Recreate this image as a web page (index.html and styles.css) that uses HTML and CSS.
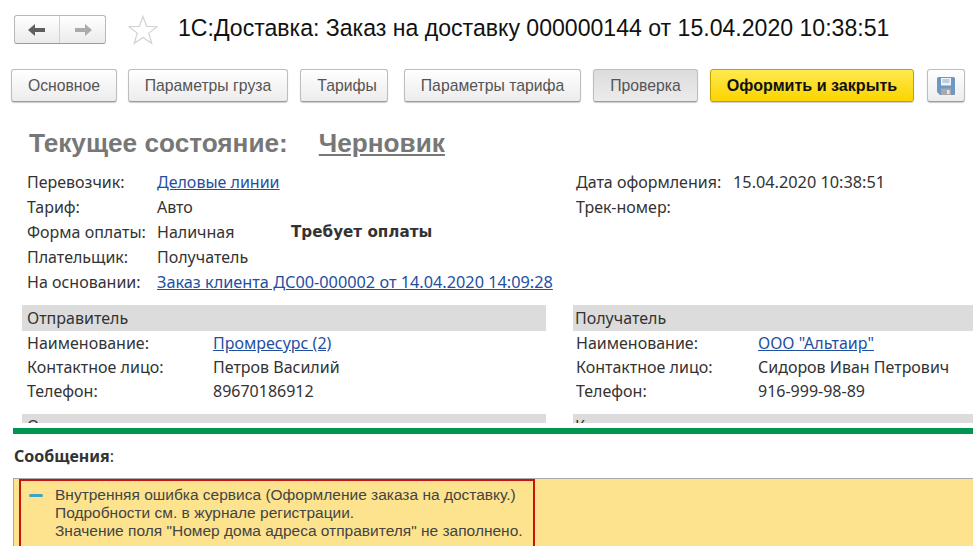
FILE: index.html
```html
<!DOCTYPE html>
<html lang="ru">
<head>
<meta charset="utf-8">
<title>1С:Доставка</title>
<link rel="stylesheet" href="styles.css">
</head>
<body>
<header class="head">
  <div class="nav">
    <span class="nav-btn nav-back"><svg width="20" height="14" viewBox="0 0 20 14"><path d="M1 7 8 1v4h10v4H8v4z" fill="#5f5f5f"/></svg></span>
    <span class="nav-btn nav-fwd"><svg width="20" height="14" viewBox="0 0 20 14"><path d="M19 7 12 1v4H2v4h10v4z" fill="#ababab"/></svg></span>
  </div>
  <svg class="star" width="30" height="30" viewBox="0 0 30 30"><path d="M15 1.5 18.6 11.4 29 11.7 20.8 18.1 23.7 28.3 15 22.4 6.3 28.3 9.2 18.1 1 11.7 11.4 11.4Z" fill="#fff" stroke="#d2d2d2" stroke-width="1.2"/></svg>
  <h1 class="title">1С:Доставка: Заказ на доставку 000000144 от 15.04.2020 10:38:51</h1>
</header>
<nav class="tabs">
  <button class="btn w-main">Основное</button>
  <button class="btn w-cargo">Параметры груза</button>
  <button class="btn w-tariffs">Тарифы</button>
  <button class="btn w-params">Параметры тарифа</button>
  <button class="btn w-check is-active">Проверка</button>
  <button class="btn w-submit is-primary">Оформить и закрыть</button>
  <button class="btn w-save" aria-label="Сохранить"><svg width="18" height="18" viewBox="0 0 18 18"><path d="M0 1.5A1.5 1.5 0 0 1 1.5 0h15A1.5 1.5 0 0 1 18 1.5V17a1 1 0 0 1-1 1H3l-3-3z" fill="#6f97c4"/><rect x="4" y="1" width="10" height="7.5" fill="#eef3f8"/><path d="M5.5 3h7M5.5 5h7" stroke="#8fa9c6"/><rect x="4" y="11.5" width="10" height="6.5" fill="#a9a9a9"/><rect x="10" y="13" width="2.5" height="4" fill="#e5e5e5"/></svg></button>
</nav>
<main class="form">
  <h2 class="status"><span class="status-label">Текущее состояние:</span><a class="status-value">Черновик</a></h2>
  <section class="summary">
    <dl class="fields fields-main">
      <dt>Перевозчик:</dt><dd><a>Деловые линии</a></dd>
      <dt>Тариф:</dt><dd>Авто</dd>
      <dt>Форма оплаты:</dt><dd class="pay"><span class="pay-type">Наличная</span><b class="pay-note">Требует оплаты</b></dd>
      <dt>Плательщик:</dt><dd>Получатель</dd>
      <dt>На основании:</dt><dd><a class="digits">Заказ клиента ДС00-000002 от 14.04.2020 14:09:28</a></dd>
    </dl>
    <dl class="fields fields-date">
      <dt>Дата оформления:</dt><dd class="digits">15.04.2020 10:38:51</dd>
      <dt>Трек-номер:</dt><dd></dd>
    </dl>
  </section>
  <section class="parties">
    <div class="party party-left">
      <h3 class="party-head">Отправитель</h3>
      <dl class="contact contact-left">
        <dt>Наименование:</dt><dd><a>Промресурс (2)</a></dd>
        <dt>Контактное лицо:</dt><dd>Петров Василий</dd>
        <dt>Телефон:</dt><dd>89670186912</dd>
      </dl>
    </div>
    <div class="party party-right">
      <h3 class="party-head">Получатель</h3>
      <dl class="contact contact-right">
        <dt>Наименование:</dt><dd><a>ООО "Альтаир"</a></dd>
        <dt>Контактное лицо:</dt><dd>Сидоров Иван Петрович</dd>
        <dt>Телефон:</dt><dd>916-999-98-89</dd>
      </dl>
    </div>
    <div class="party party-left party-next"><h3 class="party-head party-clip">Откуда</h3></div>
    <div class="party party-right party-next"><h3 class="party-head party-clip">Куда</h3></div>
  </section>
</main>
<div class="divider"></div>
<section class="messages">
  <h2 class="messages-title"><b>Сообщения</b>:</h2>
  <div class="messages-box">
    <div class="message">
      <span class="dash"></span>
      <p>Внутренняя ошибка сервиса (Оформление заказа на доставку.)<br>Подробности см. в журнале регистрации.<br>Значение поля "Номер дома адреса отправителя" не заполнено.</p>
    </div>
  </div>
</section>
</body>
</html>
```
FILE: styles.css
```css
* { box-sizing: border-box; }
html, body { margin: 0; height: 546px; overflow: hidden; background: #fff; }
body { font-family: "Noto Sans", "Liberation Sans", sans-serif; font-size: 16px; color: #333; }
h1, h2, h3, p, dl, dd { margin: 0; }
a { color: #1f4f9f; text-decoration: underline; }
.digits { font-size: 16.3px; }

.head { display: flex; align-items: center; height: 69px; padding: 0 0 10px 14px; }
.nav { display: flex; width: 92px; height: 29px; border: 1px solid #b8b8b8; border-bottom-color: #9a9a9a; border-radius: 3px; background: linear-gradient(#fff, #ebebeb); }
.nav-btn { display: flex; align-items: center; justify-content: center; width: 46px; }
.nav-back { border-right: 1px solid #d0d0d0; }
.star { margin-left: 22px; }
.title { margin: -3px 0 0 20px; font: 400 23.08px/30px "Liberation Sans", sans-serif; color: #111; white-space: nowrap; }

.tabs { display: flex; height: 33px; padding-left: 11px; }
.btn { flex: none; height: 33px; padding: 0; margin-right: 11px; border: 1px solid #bdbdbd; border-bottom-color: #9c9c9c; border-radius: 3px; background: linear-gradient(#fff, #ececec); font: 400 15.75px "Liberation Sans", sans-serif; color: #555; box-shadow: 0 1px 1px #ccc; display: flex; align-items: center; justify-content: center; }
.w-main { width: 106px; }
.w-cargo { width: 160px; margin-right: 12px; }
.w-tariffs { width: 88px; margin-right: 16px; padding-left: 6px; }
.w-params { width: 177px; margin-right: 12px; }
.w-check { width: 105px; margin-right: 12px; }
.w-submit { width: 204px; margin-right: 13px; }
.w-save { width: 38px; margin-right: 0; }
.is-active { background: linear-gradient(#dcdcdc, #ececec); }
.is-primary { background: linear-gradient(#ffe94f, #fbd400); border-color: #bfa200; color: #111; font-weight: 700; font-size: 16.1px; }

.form { height: 326px; padding-top: 25px; overflow: hidden; }
.status { display: flex; height: 32px; padding-left: 29px; font: 700 26.2px/32px "Liberation Sans", sans-serif; color: #777; }
.status-value { margin-left: 31px; color: #777; }

.summary { display: grid; grid-template-columns: 549px 1fr; padding: 11px 0 0 27px; }
.fields { display: grid; grid-auto-rows: 25px; line-height: 25px; }
.fields-main { grid-template-columns: 130px 1fr; }
.fields-date { grid-template-columns: 157px 1fr; align-content: start; }
.pay { display: flex; }
.pay-type { width: 134px; }
.pay-note { font: 700 15.2px/25px "DejaVu Sans", sans-serif; }

.parties { display: grid; grid-template-columns: 524px 400px; column-gap: 27px; padding: 10px 0 0 22px; }
.party-head { height: 26px; padding-left: 5px; background: #dcdcdc; font: 400 16px/26px "Noto Sans", sans-serif; color: #333; }
.party-clip { height: 9px; overflow: hidden; line-height: 24px; }
.party-next { margin-top: 11px; }
.contact { display: grid; grid-auto-rows: 24px; line-height: 24px; padding: 0 0 0 5px; }
.contact-left { grid-template-columns: 186px 1fr; }
.contact-right { grid-template-columns: 182px 1fr; padding-left: 3px; }
.party-right .party-head { padding-left: 2px; }

.divider { height: 6px; margin-left: 13px; background: #009650; }
.messages { padding: 13px 0 0 14px; }
.messages-title { height: 31px; font: 400 16px/18px "Noto Sans", sans-serif; color: #333; }
.messages-box { height: 68px; margin-left: -1px; border: 1px solid #a9a9a9; border-width: 1px 0 0 1px; background: #fde38e; padding-left: 5px; }
.message { display: flex; width: 516px; height: 70px; border: 2px solid #c8140f; padding: 5px 0 0 8px; }
.dash { flex: none; width: 14px; height: 3px; margin: 8px 12px 0 0; border-radius: 2px; background: #3ea3c6; }
.message p { font: 400 15.5px/18px "Liberation Sans", sans-serif; color: #444; white-space: nowrap; }
```
